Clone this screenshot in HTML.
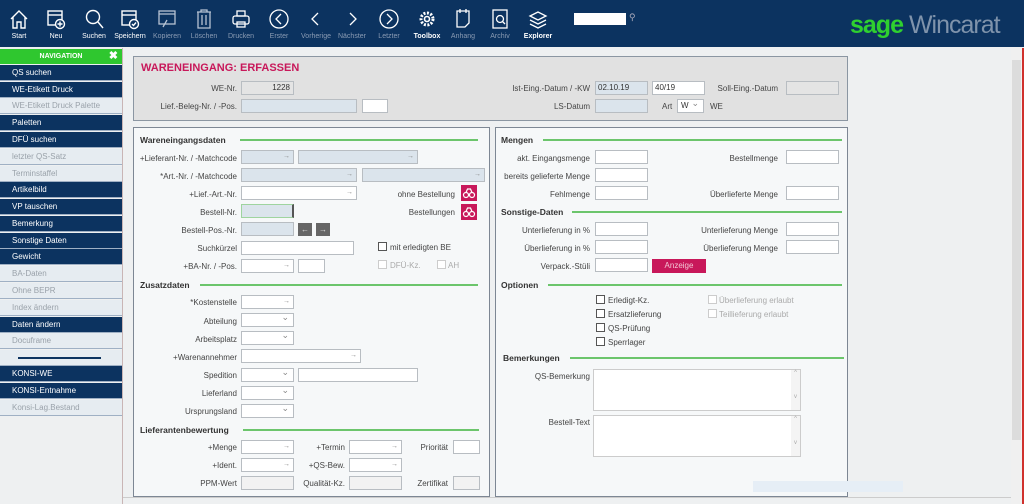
<!DOCTYPE html>
<html><head><meta charset="utf-8">
<style>
*{margin:0;padding:0;box-sizing:border-box}
body{width:1024px;height:504px;overflow:hidden;background:#eef0f1;font-family:"Liberation Sans",Arial,sans-serif;font-size:8px;color:#333;position:relative}
.a{position:absolute}
#top{left:0;top:0;width:1024px;height:47px;background:#0c3360}
.tb{position:absolute;top:7px;width:38px;text-align:center;color:#fff;font-size:7px}
.tb svg{display:block;margin:0 auto 2px;width:22px;height:24px}
.tb.d{color:#8a9bb3}
.tb b{font-weight:bold}
#side{left:0;top:48px;width:123px;height:456px;background:#eef0f1;border-right:1px solid #c9b5b5}
.nv{position:absolute;left:0;width:122px;height:16px;line-height:16px;padding-left:12px;font-size:8px;color:#fff;background:#0c3360;border-bottom:1px solid #9fb0c4}
.nv.g{background:#e6ecf1;color:#9aa2aa}
.l{position:absolute;text-align:right;font-size:8px;color:#444;white-space:nowrap}
.l.d{color:#aaa}
.i{position:absolute;height:14px;background:#fff;border:1px solid #b8bdc2}
.i.b{background:#dbe4ec}
.i.g{background:#e4e4e4}
.i.ar::after{content:"→";position:absolute;right:3px;top:0;font-size:7px;color:#888;line-height:12px}
.i.dd::after{content:"⌄";position:absolute;right:4px;top:-3px;font-size:9px;color:#888;line-height:12px}
.h{position:absolute;font-weight:bold;font-size:8.5px;color:#333}
.hl{position:absolute;height:2px;background:#6cc56c}
.cb{position:absolute;width:9px;height:9px;border:1px solid #555;background:#fff}
.cb.d{border-color:#ccc}
.pan{position:absolute;border:1px solid #7d8794;background:#f6f8f9}
.pk{position:absolute;width:16px;height:16px;background:#c8185a}
</style></head><body>
<div id="top" class="a"></div>
<div class="tb" style="left:0"><svg viewBox="0 0 22 24" fill="none" stroke="#fff" stroke-width="1.4"><path d="M3 12 L11 4 L19 12 M5 10 V21 H9 V15 H13 V21 H17 V10"/></svg>Start</div>
<div class="tb" style="left:37px"><svg viewBox="0 0 22 24" fill="none" stroke="#fff" stroke-width="1.4"><rect x="3" y="4" width="14" height="14"/><path d="M3 8H17"/><circle cx="15" cy="17" r="4.5" fill="#0c3360"/><path d="M15 14.5V19.5M12.5 17H17.5"/></svg>Neu</div>
<div class="tb" style="left:75px"><svg viewBox="0 0 22 24" fill="none" stroke="#fff" stroke-width="1.4"><circle cx="10" cy="10" r="6.5"/><path d="M15 15L20 21"/></svg>Suchen</div>
<div class="tb" style="left:111px"><svg viewBox="0 0 22 24" fill="none" stroke="#fff" stroke-width="1.4"><rect x="3" y="4" width="14" height="14"/><path d="M3 8H17"/><circle cx="15" cy="17" r="4.5" fill="#0c3360"/><path d="M13 17L14.5 18.5L17 15.5"/></svg>Speichern</div>
<div class="tb d" style="left:148px"><svg viewBox="0 0 22 24" fill="none" stroke="#b7c3d3" stroke-width="1.3"><rect x="3" y="4" width="16" height="13"/><path d="M3 7H19M7 20L11 13"/></svg>Kopieren</div>
<div class="tb d" style="left:185px"><svg viewBox="0 0 22 24" fill="none" stroke="#b7c3d3" stroke-width="1.3"><path d="M4 5H18M8 5V3H14V5M5 5V21H17V5M9 8V18M13 8V18"/></svg>Löschen</div>
<div class="tb d" style="left:222px"><svg viewBox="0 0 22 24" fill="none" stroke="#fff" stroke-width="1.3"><rect x="7" y="4" width="8" height="5"/><rect x="3" y="9" width="16" height="8" rx="2"/><rect x="7" y="15" width="8" height="5"/></svg>Drucken</div>
<div class="tb d" style="left:260px"><svg viewBox="0 0 22 24" fill="none" stroke="#fff" stroke-width="1.3"><circle cx="11" cy="12" r="9"/><path d="M13 7L8 12L13 17"/></svg>Erster</div>
<div class="tb d" style="left:297px"><svg viewBox="0 0 22 24" fill="none" stroke="#fff" stroke-width="1.3"><path d="M13 6L7 12L13 18"/></svg>Vorherige</div>
<div class="tb d" style="left:333px"><svg viewBox="0 0 22 24" fill="none" stroke="#fff" stroke-width="1.3"><path d="M9 6L15 12L9 18"/></svg>Nächster</div>
<div class="tb d" style="left:370px"><svg viewBox="0 0 22 24" fill="none" stroke="#fff" stroke-width="1.3"><circle cx="11" cy="12" r="9"/><path d="M9 7L14 12L9 17"/></svg>Letzter</div>
<div class="tb" style="left:408px"><svg viewBox="0 0 22 24" fill="none" stroke="#fff" stroke-width="1.6"><circle cx="11" cy="12" r="6" stroke-dasharray="2 1.5" stroke-width="3"/><circle cx="11" cy="12" r="2.5"/></svg><b>Toolbox</b></div>
<div class="tb d" style="left:444px"><svg viewBox="0 0 22 24" fill="none" stroke="#fff" stroke-width="1.3"><path d="M5 4H17V16L13 20H5Z M8 2V6M14 2V6"/></svg>Anhang</div>
<div class="tb d" style="left:481px"><svg viewBox="0 0 22 24" fill="none" stroke="#fff" stroke-width="1.3"><rect x="4" y="3" width="14" height="18"/><circle cx="11" cy="12" r="3.5"/><path d="M13.5 14.5L16 17"/></svg>Archiv</div>
<div class="tb" style="left:519px"><svg viewBox="0 0 22 24" fill="none" stroke="#fff" stroke-width="1.3"><path d="M3 9L11 5L19 9L11 13Z M3 13L11 17L19 13 M3 17L11 21L19 17"/></svg><b>Explorer</b></div>
<div class="a" style="left:574px;top:13px;width:52px;height:12px;background:#fff"></div>
<div class="a" style="left:629px;top:12px;color:#aab;font-size:9px">⚲</div>
<div class="a" style="left:850px;top:11px;font-size:25px;letter-spacing:-1px;white-space:nowrap"><span style="color:#2fd02f;font-weight:bold">sage</span> <span style="color:#7f93ab">Wincarat</span></div>

<div id="side" class="a"></div>
<div class="a" style="left:0;top:49px;width:122px;height:15px;background:#2fc72f;color:#fff;font-weight:bold;font-size:7px;text-align:center;line-height:15px">NAVIGATION<span style="position:absolute;right:4px;font-size:11px">✖</span></div>
<div class="nv" style="top:65px">QS suchen</div>
<div class="nv" style="top:82px">WE-Etikett Druck</div>
<div class="nv g" style="top:98px">WE-Etikett Druck Palette</div>
<div class="nv" style="top:115px">Paletten</div>
<div class="nv" style="top:132px">DFÜ suchen</div>
<div class="nv g" style="top:149px">letzter QS-Satz</div>
<div class="nv g" style="top:166px">Terminstaffel</div>
<div class="nv" style="top:182px">Artikelbild</div>
<div class="nv" style="top:199px">VP tauschen</div>
<div class="nv" style="top:216px">Bemerkung</div>
<div class="nv" style="top:233px">Sonstige Daten</div>
<div class="nv" style="top:249px">Gewicht</div>
<div class="nv g" style="top:266px">BA-Daten</div>
<div class="nv g" style="top:283px">Ohne BEPR</div>
<div class="nv g" style="top:300px">Index ändern</div>
<div class="nv" style="top:317px">Daten ändern</div>
<div class="nv g" style="top:333px">Docuframe</div>
<div class="nv g" style="top:350px"></div>
<div class="a" style="left:18px;top:357px;width:83px;height:2px;background:#0c3360"></div>
<div class="nv" style="top:366px">KONSI-WE</div>
<div class="nv" style="top:383px">KONSI-Entnahme</div>
<div class="nv g" style="top:400px">Konsi-Lag.Bestand</div>

<div class="a" style="left:1011px;top:48px;width:11px;height:456px;background:#f0f0f0"></div>
<div class="a" style="left:1012px;top:60px;width:9px;height:380px;background:#dcdcdc"></div>
<div class="a" style="left:1022px;top:48px;width:2px;height:456px;background:#d0312d"></div>
<div class="a" style="left:123px;top:497px;width:888px;height:7px;border-top:1px solid #ccc;background:#eef0f1"></div>

<div class="a" style="left:133px;top:56px;width:715px;height:65px;background:#e1e1e1;border:1px solid #8b96a2"></div>
<div class="a" style="left:141px;top:62px;color:#c8185a;font-weight:bold;font-size:11px">WARENEINGANG: ERFASSEN</div>
<div class="l" style="right:787px;top:84px">WE-Nr.</div>
<div class="i g" style="left:241px;top:81px;width:53px;text-align:right;padding-right:3px;line-height:12px">1228</div>
<div class="l" style="right:787px;top:102px">Lief.-Beleg-Nr. / -Pos.</div>
<div class="i b" style="left:241px;top:99px;width:116px"></div>
<div class="i" style="left:362px;top:99px;width:26px"></div>
<div class="l" style="right:434px;top:84px">Ist-Eing.-Datum / -KW</div>
<div class="i b" style="left:595px;top:81px;width:53px;padding-left:2px;line-height:12px">02.10.19</div>
<div class="i" style="left:652px;top:81px;width:53px;padding-left:2px;line-height:12px">40/19</div>
<div class="l" style="right:246px;top:84px">Soll-Eing.-Datum</div>
<div class="i g" style="left:786px;top:81px;width:53px"></div>
<div class="l" style="right:434px;top:102px">LS-Datum</div>
<div class="i b" style="left:595px;top:99px;width:53px"></div>
<div class="l" style="left:662px;top:102px">Art</div>
<div class="i dd" style="left:677px;top:99px;width:27px;padding-left:3px;line-height:12px">W</div>
<div class="l" style="left:710px;top:102px">WE</div>

<div class="pan" style="left:133px;top:127px;width:357px;height:370px"></div>
<div class="h" style="left:140px;top:135px">Wareneingangsdaten</div><div class="hl" style="left:240px;top:139px;width:238px"></div>
<div class="l" style="right:787px;top:154px">+Lieferant-Nr. / -Matchcode</div>
<div class="i b ar" style="left:241px;top:150px;width:53px"></div><div class="i b ar" style="left:298px;top:150px;width:120px"></div>
<div class="l" style="right:787px;top:172px">*Art.-Nr. / -Matchcode</div>
<div class="i b ar" style="left:241px;top:168px;width:116px"></div><div class="i b ar" style="left:362px;top:168px;width:123px"></div>
<div class="l" style="right:787px;top:190px">+Lief.-Art.-Nr.</div>
<div class="i ar" style="left:241px;top:186px;width:116px"></div>
<div class="l" style="right:569px;top:190px">ohne Bestellung</div>
<div class="pk" style="left:461px;top:185px"><svg width="16" height="16" viewBox="0 0 16 16" fill="none" stroke="#fff" stroke-width="1.2"><circle cx="5" cy="10" r="2.5"/><circle cx="11" cy="10" r="2.5"/><path d="M5 7.5L6.5 4H9.5L11 7.5M7.5 10H8.5"/></svg></div>
<div class="l" style="right:787px;top:208px">Bestell-Nr.</div>
<div class="i b" style="left:241px;top:204px;width:53px;border-color:#9fd49f;border-right:2px solid #555"></div>
<div class="l" style="right:569px;top:208px">Bestellungen</div>
<div class="pk" style="left:461px;top:204px"><svg width="16" height="16" viewBox="0 0 16 16" fill="none" stroke="#fff" stroke-width="1.2"><circle cx="5" cy="10" r="2.5"/><circle cx="11" cy="10" r="2.5"/><path d="M5 7.5L6.5 4H9.5L11 7.5M7.5 10H8.5"/></svg></div>
<div class="l" style="right:787px;top:226px">Bestell-Pos.-Nr.</div>
<div class="i b" style="left:241px;top:222px;width:53px"></div>
<div class="a" style="left:298px;top:223px;width:14px;height:13px;background:#666;color:#ddd;font-size:8px;text-align:center;line-height:13px">←</div>
<div class="a" style="left:316px;top:223px;width:14px;height:13px;background:#666;color:#ddd;font-size:8px;text-align:center;line-height:13px">→</div>
<div class="l" style="right:787px;top:244px">Suchkürzel</div>
<div class="i" style="left:241px;top:241px;width:113px"></div>
<div class="cb" style="left:378px;top:242px"></div><div class="l" style="left:390px;top:243px">mit erledigten BE</div>
<div class="l" style="right:787px;top:262px">+BA-Nr. / -Pos.</div>
<div class="i ar" style="left:241px;top:259px;width:53px"></div><div class="i" style="left:298px;top:259px;width:27px"></div>
<div class="cb d" style="left:378px;top:260px"></div><div class="l d" style="left:390px;top:261px">DFÜ-Kz.</div>
<div class="cb d" style="left:437px;top:260px"></div><div class="l d" style="left:448px;top:261px">AH</div>
<div class="h" style="left:140px;top:280px">Zusatzdaten</div><div class="hl" style="left:200px;top:284px;width:278px"></div>
<div class="l" style="right:787px;top:298px">*Kostenstelle</div><div class="i ar" style="left:241px;top:295px;width:53px"></div>
<div class="l" style="right:787px;top:317px">Abteilung</div><div class="i dd" style="left:241px;top:313px;width:53px"></div>
<div class="l" style="right:787px;top:335px">Arbeitsplatz</div><div class="i dd" style="left:241px;top:331px;width:53px"></div>
<div class="l" style="right:787px;top:353px">+Warenannehmer</div><div class="i ar" style="left:241px;top:349px;width:120px"></div>
<div class="l" style="right:787px;top:371px">Spedition</div><div class="i dd" style="left:241px;top:368px;width:53px"></div><div class="i" style="left:298px;top:368px;width:120px"></div>
<div class="l" style="right:787px;top:389px">Lieferland</div><div class="i dd" style="left:241px;top:386px;width:53px"></div>
<div class="l" style="right:787px;top:407px">Ursprungsland</div><div class="i dd" style="left:241px;top:404px;width:53px"></div>
<div class="h" style="left:140px;top:425px">Lieferantenbewertung</div><div class="hl" style="left:243px;top:429px;width:236px"></div>
<div class="l" style="right:787px;top:443px">+Menge</div><div class="i ar" style="left:241px;top:440px;width:53px"></div>
<div class="l" style="right:679px;top:443px">+Termin</div><div class="i ar" style="left:349px;top:440px;width:53px"></div>
<div class="l" style="right:576px;top:443px">Priorität</div><div class="i" style="left:453px;top:440px;width:27px"></div>
<div class="l" style="right:787px;top:461px">+Ident.</div><div class="i ar" style="left:241px;top:458px;width:53px"></div>
<div class="l" style="right:679px;top:461px">+QS-Bew.</div><div class="i ar" style="left:349px;top:458px;width:53px"></div>
<div class="l" style="right:787px;top:479px">PPM-Wert</div><div class="i g" style="left:241px;top:476px;width:53px;background:#f2f2f2"></div>
<div class="l" style="right:679px;top:479px">Qualität-Kz.</div><div class="i g" style="left:349px;top:476px;width:53px;background:#f2f2f2"></div>
<div class="l" style="right:576px;top:479px">Zertifikat</div><div class="i g" style="left:453px;top:476px;width:27px;background:#f2f2f2"></div>

<div class="pan" style="left:495px;top:127px;width:353px;height:370px"></div>
<div class="h" style="left:501px;top:135px">Mengen</div><div class="hl" style="left:543px;top:139px;width:299px"></div>
<div class="l" style="right:434px;top:154px">akt. Eingangsmenge</div><div class="i" style="left:595px;top:150px;width:53px"></div>
<div class="l" style="right:246px;top:154px">Bestellmenge</div><div class="i" style="left:786px;top:150px;width:53px"></div>
<div class="l" style="right:434px;top:172px">bereits gelieferte Menge</div><div class="i" style="left:595px;top:168px;width:53px"></div>
<div class="l" style="right:434px;top:190px">Fehlmenge</div><div class="i" style="left:595px;top:186px;width:53px"></div>
<div class="l" style="right:246px;top:190px">Überlieferte Menge</div><div class="i" style="left:786px;top:186px;width:53px"></div>
<div class="h" style="left:501px;top:207px">Sonstige-Daten</div><div class="hl" style="left:572px;top:211px;width:270px"></div>
<div class="l" style="right:434px;top:226px">Unterlieferung in %</div><div class="i" style="left:595px;top:222px;width:53px"></div>
<div class="l" style="right:246px;top:226px">Unterlieferung Menge</div><div class="i" style="left:786px;top:222px;width:53px"></div>
<div class="l" style="right:434px;top:244px">Überlieferung in %</div><div class="i" style="left:595px;top:240px;width:53px"></div>
<div class="l" style="right:246px;top:244px">Überlieferung Menge</div><div class="i" style="left:786px;top:240px;width:53px"></div>
<div class="l" style="right:434px;top:262px">Verpack.-Stüli</div><div class="i" style="left:595px;top:258px;width:53px"></div>
<div class="a" style="left:652px;top:259px;width:54px;height:14px;background:#c8185a;color:#f3c6d6;font-size:8px;text-align:center;line-height:14px">Anzeige</div>
<div class="h" style="left:501px;top:280px">Optionen</div><div class="hl" style="left:548px;top:284px;width:294px"></div>
<div class="cb" style="left:596px;top:295px"></div><div class="l" style="left:608px;top:296px">Erledigt-Kz.</div>
<div class="cb" style="left:596px;top:309px"></div><div class="l" style="left:608px;top:310px">Ersatzlieferung</div>
<div class="cb" style="left:596px;top:323px"></div><div class="l" style="left:608px;top:324px">QS-Prüfung</div>
<div class="cb" style="left:596px;top:337px"></div><div class="l" style="left:608px;top:338px">Sperrlager</div>
<div class="cb d" style="left:708px;top:295px"></div><div class="l d" style="left:719px;top:296px">Überlieferung erlaubt</div>
<div class="cb d" style="left:708px;top:309px"></div><div class="l d" style="left:719px;top:310px">Teillieferung erlaubt</div>
<div class="h" style="left:503px;top:353px">Bemerkungen</div><div class="hl" style="left:570px;top:357px;width:274px"></div>
<div class="l" style="right:434px;top:372px">QS-Bemerkung</div>
<div class="i" style="left:593px;top:369px;width:208px;height:42px;border-color:#ccc"></div>
<div class="a" style="left:791px;top:370px;width:9px;height:40px;background:#f4f4f4;color:#aaa;font-size:6px;text-align:center">^<br><br><br><br>v</div>
<div class="l" style="right:434px;top:418px">Bestell-Text</div>
<div class="i" style="left:593px;top:415px;width:208px;height:42px;border-color:#ccc"></div>
<div class="a" style="left:791px;top:416px;width:9px;height:40px;background:#f4f4f4;color:#aaa;font-size:6px;text-align:center">^<br><br><br><br>v</div>
<div class="a" style="left:753px;top:481px;width:150px;height:11px;background:#e6eef6"></div>
</body></html>
